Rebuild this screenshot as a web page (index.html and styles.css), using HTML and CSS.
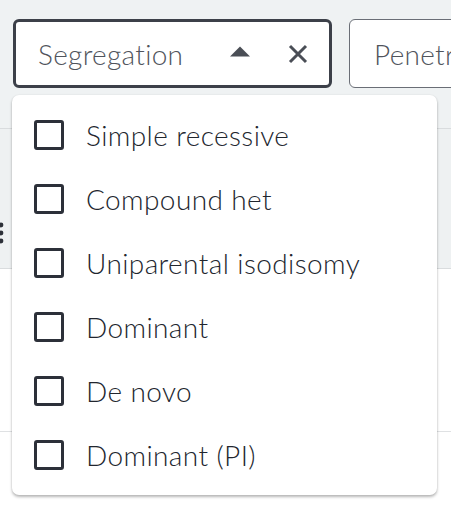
FILE: index.html
```html
<!DOCTYPE html>
<html>
<head>
<meta charset="utf-8">
<link rel="stylesheet" href="styles.css">
</head>
<body>
<div class="page">
  <div class="toolbar">
    <div class="select select-open">
      <span class="select-label">Segregation</span>
      <svg class="caret" width="20" height="11" viewBox="0 0 20 11"><path d="M0 10.5 L10 0.5 L20 10.5 Z" fill="#4a4e56"/></svg>
      <svg class="clear" width="20" height="20" viewBox="0 0 20 20"><path d="M2 2 L18 18 M18 2 L2 18" stroke="#4a4e56" stroke-width="3" fill="none"/></svg>
    </div>
    <div class="select">
      <span class="select-label">Penetrance</span>
    </div>
  </div>
  <div class="table">
    <div class="table-head">
      <svg class="kebab" width="6" height="22" viewBox="0 0 6 22"><circle cx="1" cy="3" r="2.4" fill="#2d3139"/><circle cx="1" cy="11" r="2.4" fill="#2d3139"/><circle cx="1" cy="19" r="2.4" fill="#2d3139"/></svg>
    </div>
    <div class="table-row"></div>
    <div class="table-row"></div>
  </div>
  <ul class="menu">
    <li class="menu-item"><span class="checkbox"></span><span class="menu-text">Simple recessive</span></li>
    <li class="menu-item"><span class="checkbox"></span><span class="menu-text">Compound het</span></li>
    <li class="menu-item"><span class="checkbox"></span><span class="menu-text">Uniparental isodisomy</span></li>
    <li class="menu-item"><span class="checkbox"></span><span class="menu-text">Dominant</span></li>
    <li class="menu-item"><span class="checkbox"></span><span class="menu-text">De novo</span></li>
    <li class="menu-item"><span class="checkbox"></span><span class="menu-text">Dominant (PI)</span></li>
  </ul>
</div>
</body>
</html>
```

FILE: styles.css
```css
* { box-sizing: border-box; }
html, body { margin: 0; padding: 0; }
body {
  background: #ffffff;
  font-family: Lato, "Noto Sans", sans-serif;
  width: 451px;
  height: 520px;
  overflow: hidden;
}
.page {
  position: relative;
  height: 520px;
  overflow: hidden;
  background: #ffffff;
}
.toolbar {
  display: flex;
  gap: 17px;
  padding: 19px 0 0 13px;
  height: 128px;
  background: #eff2f3;
}
.select {
  flex: none;
  display: flex;
  align-items: center;
  height: 69px;
  width: 319px;
  background: #ffffff;
  border: 1.5px solid #6a6e76;
  border-radius: 6px;
  padding: 0 22px 0 24px;
}
.select-open {
  border: 3px solid #3c4049;
  padding-left: 22px;
}
.select-label {
  font-size: 28px;
  font-weight: 300;
  letter-spacing: 0.3px;
  color: #50545c;
  flex: 1;
  white-space: nowrap;
}
.caret { margin-right: 38px; margin-top: -4px; }
.clear { margin-right: -1px; }
.table-head {
  height: 141px;
  background: #eef1f2;
  border-top: 1px solid #d9dcde;
  border-bottom: 1px solid #d9dcde;
  display: flex;
  align-items: flex-end;
  padding-bottom: 24px;
}
.kebab { display: block; }
.table-row {
  height: 163px;
  border-bottom: 1px solid #dfe1e3;
  background: #ffffff;
}
.menu {
  position: absolute;
  top: 95px;
  left: 12px;
  width: 425px;
  margin: 0;
  padding: 8px 0;
  list-style: none;
  background: #ffffff;
  border-radius: 7px;
  box-shadow: 0 2px 3px rgba(0,0,0,0.28), 0 0 2px rgba(0,0,0,0.08);
}
.menu-item {
  display: flex;
  align-items: center;
  height: 64px;
  padding-left: 22px;
}
.checkbox {
  flex: none;
  width: 30px;
  height: 30px;
  border: 3px solid #2c3039;
  border-radius: 3px;
  margin-right: 22px;
}
.menu-text {
  font-size: 28px;
  font-weight: 300;
  letter-spacing: 0.4px;
  color: #22262e;
  line-height: 1;
}
```
